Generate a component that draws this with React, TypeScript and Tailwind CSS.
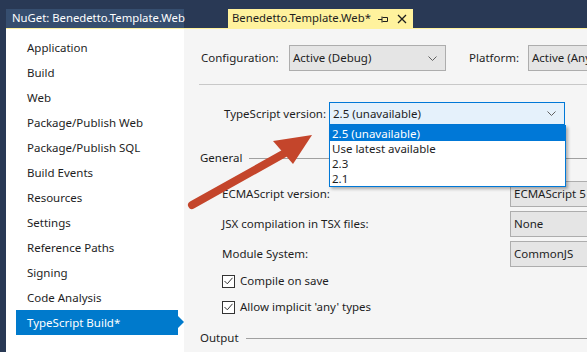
import React from "react";

const font = { fontFamily: '"Segoe UI", "Noto Sans", "Open Sans", sans-serif' };

const navItems = [
  "Application",
  "Build",
  "Web",
  "Package/Publish Web",
  "Package/Publish SQL",
  "Build Events",
  "Resources",
  "Settings",
  "Reference Paths",
  "Signing",
  "Code Analysis",
];

const Chevron = () => (
  <svg width="9" height="5" viewBox="0 0 9 5" className="shrink-0">
    <polyline points="0.5,0.5 4.5,4.5 8.5,0.5" fill="none" stroke="#606060" strokeWidth="1" />
  </svg>
);

const Select = ({ text, width, focused }: { text: string; width: string; focused?: boolean }) => (
  <div
    className={`flex shrink-0 items-center justify-between border pl-[3px] pr-[8px] ${width} ${
      focused ? "h-[23px] border-[#0078d7] bg-[#e5f1fb]" : "h-[26px] border-[#adadad] bg-[#e5e5e5]"
    }`}
  >
    <span className="whitespace-nowrap">{text}</span>
    <Chevron />
  </div>
);

const Box = ({ text }: { text: string }) => (
  <div className="flex h-[26px] w-[100px] shrink-0 items-center border border-[#adadad] bg-[#e5e5e5] pl-[3px] whitespace-nowrap">
    {text}
  </div>
);

const Check = ({ label }: { label: string }) => (
  <div className="flex h-[16px] items-center gap-[5px] pl-[38px]">
    <div className="flex h-[13px] w-[13px] items-center justify-center border border-[#333333] bg-white">
      <svg width="9" height="8" viewBox="0 0 9 8">
        <polyline points="0.5,4 3.3,6.8 8.5,0.8" fill="none" stroke="#333333" strokeWidth="1" />
      </svg>
    </div>
    <span className="whitespace-nowrap">{label}</span>
  </div>
);

const Section = ({ title }: { title: string }) => (
  <div className="flex h-[16px] items-center pl-[16px]">
    <span>{title}</span>
    <div className="ml-[7px] h-px flex-1 bg-[#a0a0a0]" />
  </div>
);

export default function App() {
  return (
    <div
      className="relative flex h-[352px] w-[587px] flex-col overflow-hidden bg-[#293955] text-[11.5px] text-[#1e1e1e]"
      style={font}
    >
      {/* Tabs */}
      <div className="mt-[9px] flex h-[19px] pl-[6px] text-[11.3px]">
        <div className="flex w-[178px] shrink-0 items-center bg-[#364e6f] pl-[6px] text-white whitespace-nowrap">
          NuGet: Benedetto.Template.Web
        </div>
        <div className="ml-[44px] flex w-[185px] shrink-0 items-center bg-[#fff29d] pl-[4px] text-[#1e1e1e] whitespace-nowrap">
          <span>Benedetto.Template.Web*</span>
          <svg width="10" height="10" viewBox="0 0 10 10" className="ml-auto">
            <path d="M0 5.5H4M4 2.5V8.5M4.5 3.5H9.5V7.5H4.5" fill="none" stroke="#1e1e1e" strokeWidth="1" />
          </svg>
          <svg width="10" height="10" viewBox="0 0 10 10" className="ml-[9px] mr-[6px]">
            <path d="M1 1L9 9M9 1L1 9" stroke="#1e1e1e" strokeWidth="1.3" />
          </svg>
        </div>
      </div>
      <div className="ml-[6px] h-px bg-[#fff29d]" />

      <div className="flex min-h-0 flex-1 pl-[6px]">
        {/* Sidebar */}
        <div className="w-[178px] shrink-0 bg-white pt-[6px]">
          {navItems.map((item) => (
            <div key={item} className="flex h-[25px] items-center pl-[21px] whitespace-nowrap">
              {item}
            </div>
          ))}
          <div className="relative ml-[10px] flex h-[25px] w-[162px] items-center bg-[#007acc] pl-[11px] text-white">
            TypeScript Build*
            <div className="absolute right-[-6px] top-[6px] h-0 w-0 border-y-[6px] border-l-[6px] border-y-transparent border-l-[#007acc]" />
          </div>
        </div>

        {/* Content */}
        <div className="flex min-w-0 flex-1 flex-col overflow-hidden bg-[#f5f5f5]">
          <div className="mt-[16px] flex items-center pl-[17px]">
            <span className="w-[88px] shrink-0 whitespace-nowrap">Configuration:</span>
            <Select text="Active (Debug)" width="w-[157px]" />
            <span className="ml-[23px] w-[59px] shrink-0 whitespace-nowrap">Platform:</span>
            <Select text="Active (Any CPU)" width="w-[100px]" />
          </div>
          <div className="ml-[15px] mt-[13px] h-px bg-[#c8c8c8]" />

          <div className="mt-[17px] flex items-center pl-[40px]">
            <span className="w-[105px] shrink-0 whitespace-nowrap">TypeScript version:</span>
            <Select text="2.5 (unavailable)" width="w-[236px]" focused />
          </div>

          <div className="mt-[25px]">
            <Section title="General" />
          </div>

          <div className="mt-[15px] flex flex-col gap-[4px]">
            {[
              ["ECMAScript version:", "ECMAScript 5"],
              ["JSX compilation in TSX files:", "None"],
              ["Module System:", "CommonJS"],
            ].map(([label, value]) => (
              <div key={label} className="flex items-center pl-[38px]">
                <span className="w-[288px] shrink-0 whitespace-nowrap">{label}</span>
                <Box text={value} />
              </div>
            ))}
          </div>

          <div className="mt-[6px] flex flex-col gap-[10px]">
            <Check label="Compile on save" />
            <Check label="Allow implicit 'any' types" />
          </div>

          <div className="mt-[15px]">
            <Section title="Output" />
          </div>
        </div>
      </div>

      {/* Open dropdown list */}
      <div className="absolute left-[329px] top-[125px] flex w-[237px] flex-col border border-[#0078d7] bg-white shadow-[2px_2px_3px_rgba(0,0,0,0.3)]">
        <div className="flex h-[15px] items-center bg-[#0078d7] pl-[2px] text-white">2.5 (unavailable)</div>
        <div className="flex h-[15px] items-center pl-[2px]">Use latest available</div>
        <div className="flex h-[15px] items-center pl-[2px]">2.3</div>
        <div className="flex h-[15px] items-center pl-[2px]">2.1</div>
      </div>

      {/* Annotation arrow */}
      <svg className="pointer-events-none absolute left-0 top-0" width="587" height="352" viewBox="0 0 587 352">
        <line x1="192" y1="205" x2="285" y2="153" stroke="#c4452b" strokeWidth="8" strokeLinecap="round" />
        <polygon points="312,135 273,141 293,164" fill="#c4452b" />
      </svg>
    </div>
  );
}
